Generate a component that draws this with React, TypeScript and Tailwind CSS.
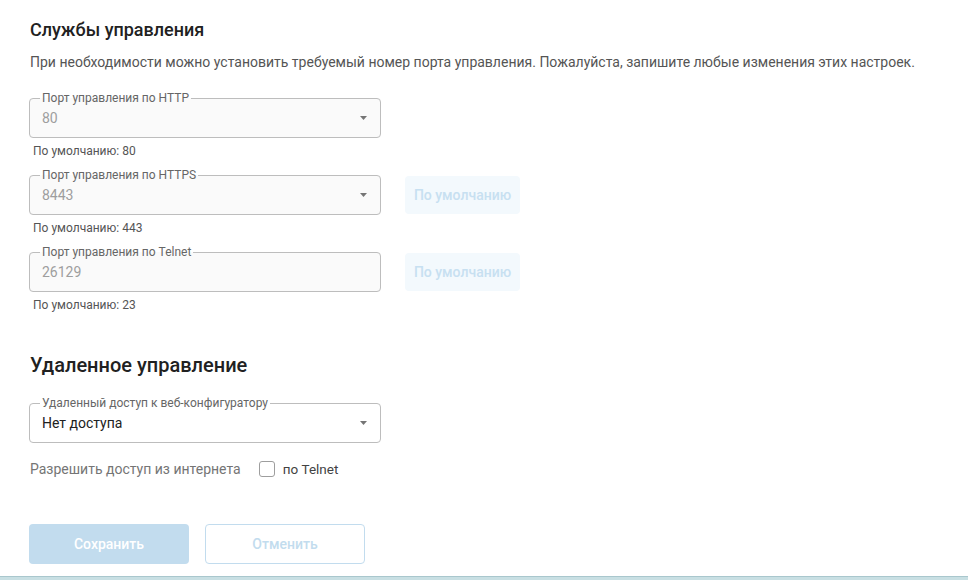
import type { ReactNode } from 'react';

const font = { fontFamily: 'Roboto, "Noto Sans", sans-serif' };

function Caret() {
  return (
    <svg width="7" height="4" viewBox="0 0 7 4" className="shrink-0">
      <path d="M0 0h7L3.5 4z" fill="#757575" />
    </svg>
  );
}

function Field({
  label,
  value,
  select,
  disabled = true,
}: {
  label: string;
  value: string;
  select?: boolean;
  disabled?: boolean;
}) {
  return (
    <fieldset
      className={`w-[352px] h-[46px] -mt-[6px] rounded-[4px] border border-[#bdbdbd] pl-[12px] pr-[13px] flex items-center ${
        disabled ? 'bg-[#fafafa]' : 'bg-white'
      }`}
    >
      <legend className="ml-[-2px] px-[2px] text-[12px] leading-[12px] text-[#666]">{label}</legend>
      <div className="flex items-center justify-between w-full -mt-[5px]">
        <span className={`text-[14px] ${disabled ? 'text-[#9e9e9e]' : 'text-[#212121]'}`}>{value}</span>
        {select && <Caret />}
      </div>
    </fieldset>
  );
}

function Helper({ children }: { children: ReactNode }) {
  return <div className="mt-[6px] pl-[4px] text-[12px] leading-[14px] text-[#555]">{children}</div>;
}

function DefaultButton() {
  return (
    <button className="ml-[24px] mt-[1px] w-[115px] h-[38px] rounded-[4px] bg-[#f3f9fd] text-[14px] font-medium text-[#c7e0f1]">
      По умолчанию
    </button>
  );
}

export default function App() {
  return (
    <div className="w-[968px] h-[580px] bg-white flex flex-col overflow-hidden" style={font}>
      <div className="flex-1 pl-[29px] pt-[18px]">
        <h2 className="pl-[1px] text-[18px] leading-[24px] font-medium text-[#212121]">Службы управления</h2>
        <p className="mt-[12px] pl-[1px] text-[14px] leading-[16px] text-[#555]">
          При необходимости можно установить требуемый номер порта управления. Пожалуйста, запишите любые изменения этих настроек.
        </p>

        <div className="mt-[28px]">
          <Field label="Порт управления по HTTP" value="80" select />
          <Helper>По умолчанию: 80</Helper>
        </div>

        <div className="mt-[17px]">
          <div className="flex items-start">
            <Field label="Порт управления по HTTPS" value="8443" select />
            <DefaultButton />
          </div>
          <Helper>По умолчанию: 443</Helper>
        </div>

        <div className="mt-[17px]">
          <div className="flex items-start">
            <Field label="Порт управления по Telnet" value="26129" />
            <DefaultButton />
          </div>
          <Helper>По умолчанию: 23</Helper>
        </div>

        <h2 className="mt-[41px] pl-[1px] text-[20px] leading-[24px] font-medium text-[#212121]">Удаленное управление</h2>

        <div className="mt-[26px]">
          <Field label="Удаленный доступ к веб-конфигуратору" value="Нет доступа" select disabled={false} />
        </div>

        <div className="mt-[16px] flex items-center pl-[1px] text-[14px] leading-[20px] text-[#757575]">
          <span>Разрешить доступ из интернета</span>
          <span className="ml-[18px] w-[16px] h-[16px] rounded-[3px] border border-[#9e9e9e] bg-white" />
          <span className="ml-[8px] text-[13.5px] text-[#424242]">по Telnet</span>
        </div>

        <div className="mt-[45px] flex gap-[16px]">
          <button className="w-[160px] h-[40px] rounded-[4px] bg-[#c2dcee] text-[14px] font-medium text-white">
            Сохранить
          </button>
          <button className="w-[160px] h-[40px] rounded-[4px] border border-[#c2dcee] bg-white text-[14px] font-medium text-[#c2dcee]">
            Отменить
          </button>
        </div>
      </div>
      <div className="h-[4px] border-t border-[#a9c7cd] bg-[#c8dfe3]" />
    </div>
  );
}
